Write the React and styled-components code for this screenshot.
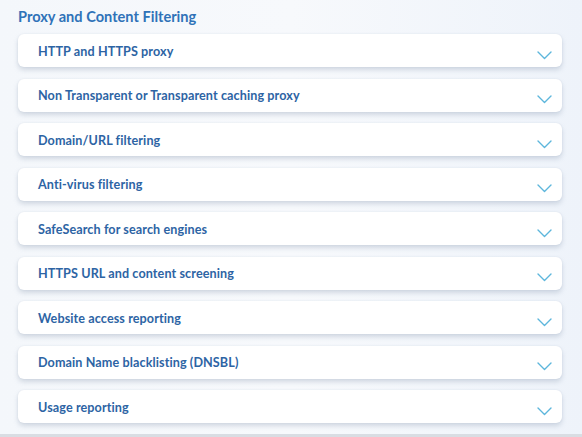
import React from 'react'
import styled, { createGlobalStyle } from 'styled-components'

const items = [
  'HTTP and HTTPS proxy',
  'Non Transparent or Transparent caching proxy',
  'Domain/URL filtering',
  'Anti-virus filtering',
  'SafeSearch for search engines',
  'HTTPS URL and content screening',
  'Website access reporting',
  'Domain Name blacklisting (DNSBL)',
  'Usage reporting',
]

const GlobalStyle = createGlobalStyle`
  html, body {
    margin: 0;
    padding: 0;
    background: #f3f6fb;
    font-family: Lato, "Open Sans", sans-serif;
  }
`

const Panel = styled.section`
  width: 582px;
  height: 437px;
  box-sizing: border-box;
  padding: 7px 20px 0 18px;
  background: linear-gradient(90deg, #f4f7fb 0%, #f7f9fc 50%, #eef3fa 100%);
  border-bottom: 3px solid #d9dde3;
`

const Title = styled.h2`
  margin: 0 0 8px;
  font-size: 14.6px;
  font-weight: 700;
  color: #2f72b8;
  line-height: 19px;
`

const List = styled.div`
  display: flex;
  flex-direction: column;
  gap: 11.5px;
`

const Card = styled.div`
  height: 33px;
  display: flex;
  align-items: center;
  justify-content: space-between;
  padding: 0 10px 0 20px;
  background: #fff;
  border-radius: 6px;
  box-shadow: 0 3px 5px rgba(120, 135, 160, 0.28), 0 0 2px rgba(120, 135, 160, 0.12);
`

const Label = styled.span`
  font-size: 12.6px;
  font-weight: 700;
  color: #2d64a4;
  letter-spacing: 0.1px;
  padding-top: 1px;
`

const Chevron = styled.svg`
  width: 15px;
  height: 9px;
  margin-top: 9px;
  flex: none;
`

function App() {
  return (
    <>
      <GlobalStyle />
      <Panel>
        <Title>Proxy and Content Filtering</Title>
        <List>
          {items.map((item) => (
            <Card key={item}>
              <Label>{item}</Label>
              <Chevron viewBox="0 0 15 9">
                <path d="M1 1 L7.5 7.5 L14 1" fill="none" stroke="#5db6dc" strokeWidth="1.4" strokeLinecap="round" strokeLinejoin="round" />
              </Chevron>
            </Card>
          ))}
        </List>
      </Panel>
    </>
  )
}

export default App
